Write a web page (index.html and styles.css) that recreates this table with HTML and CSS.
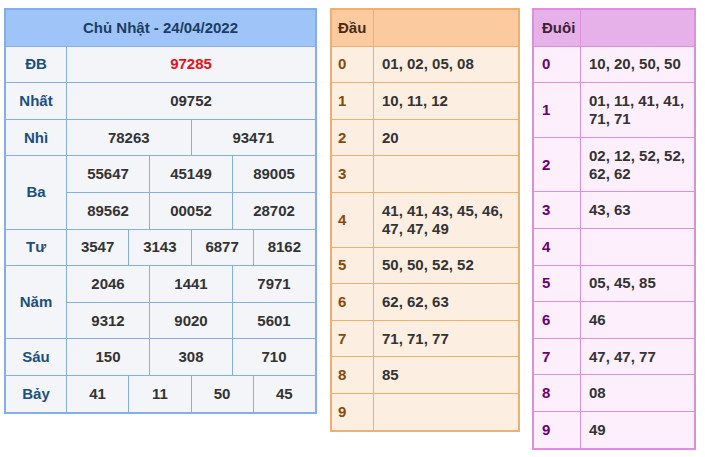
FILE: index.html
```html
<!DOCTYPE html>
<html lang="vi">
<head>
<meta charset="utf-8">
<title>Kết quả xổ số</title>
<link rel="stylesheet" href="styles.css">
</head>
<body>
<div class="page">
  <div class="kq">
    <div class="kq-title">Chủ Nhật - 24/04/2022</div>
    <div class="lbl">ĐB</div><div class="v s12 red">97285</div>
    <div class="lbl">Nhất</div><div class="v s12">09752</div>
    <div class="lbl">Nhì</div><div class="v s6">78263</div><div class="v s6">93471</div>
    <div class="lbl r2">Ba</div><div class="v s4">55647</div><div class="v s4">45149</div><div class="v s4">89005</div>
    <div class="v s4">89562</div><div class="v s4">00052</div><div class="v s4">28702</div>
    <div class="lbl">Tư</div><div class="v s3">3547</div><div class="v s3">3143</div><div class="v s3">6877</div><div class="v s3">8162</div>
    <div class="lbl r2">Năm</div><div class="v s4">2046</div><div class="v s4">1441</div><div class="v s4">7971</div>
    <div class="v s4">9312</div><div class="v s4">9020</div><div class="v s4">5601</div>
    <div class="lbl">Sáu</div><div class="v s4">150</div><div class="v s4">308</div><div class="v s4">710</div>
    <div class="lbl">Bảy</div><div class="v s3">41</div><div class="v s3">11</div><div class="v s3">50</div><div class="v s3">45</div>
  </div>

  <div class="lt dau">
    <div class="h">Đầu</div><div class="h"></div>
    <div class="k">0</div><div class="d">01, 02, 05, 08</div>
    <div class="k">1</div><div class="d">10, 11, 12</div>
    <div class="k">2</div><div class="d">20</div>
    <div class="k">3</div><div class="d"></div>
    <div class="k">4</div><div class="d">41, 41, 43, 45, 46, 47, 47, 49</div>
    <div class="k">5</div><div class="d">50, 50, 52, 52</div>
    <div class="k">6</div><div class="d">62, 62, 63</div>
    <div class="k">7</div><div class="d">71, 71, 77</div>
    <div class="k">8</div><div class="d">85</div>
    <div class="k">9</div><div class="d"></div>
  </div>

  <div class="lt duoi">
    <div class="h">Đuôi</div><div class="h"></div>
    <div class="k">0</div><div class="d">10, 20, 50, 50</div>
    <div class="k">1</div><div class="d">01, 11, 41, 41, 71, 71</div>
    <div class="k">2</div><div class="d">02, 12, 52, 52, 62, 62</div>
    <div class="k">3</div><div class="d">43, 63</div>
    <div class="k">4</div><div class="d"></div>
    <div class="k">5</div><div class="d">05, 45, 85</div>
    <div class="k">6</div><div class="d">46</div>
    <div class="k">7</div><div class="d">47, 47, 77</div>
    <div class="k">8</div><div class="d">08</div>
    <div class="k">9</div><div class="d">49</div>
  </div>
</div>
</body>
</html>
```
FILE: styles.css
```css
html, body {
  margin: 0;
  padding: 0;
  background: #ffffff;
}
body {
  font-family: "Liberation Sans", Arial, sans-serif;
  font-size: 15px;
  font-weight: bold;
  color: #333333;
}
.page {
  display: flex;
  align-items: flex-start;
  padding: 8px 0 0 4px;
}
.kq {
  width: 313px;
  box-sizing: border-box;
  display: grid;
  grid-template-columns: 60px repeat(12, 1fr);
  gap: 1px;
  background: #84ade9;
  border: 2px solid #84ade9;
}
.kq > div {
  background: #f3f5f9;
  line-height: 18px;
  padding: 8.8px 0;
  text-align: center;
  display: flex;
  align-items: center;
  justify-content: center;
}
.kq .kq-title {
  grid-column: 1 / -1;
  background: #9fc5f8;
  color: #1b3d63;
}
.kq .lbl {
  grid-column: 1;
  color: #1b4f7f;
}
.kq .r2 { grid-row: span 2; }
.s12 { grid-column: span 12; }
.s6 { grid-column: span 6; }
.s4 { grid-column: span 4; }
.s3 { grid-column: span 3; }
.red { color: #e8101a; }

.lt {
  box-sizing: border-box;
  display: grid;
  gap: 1px;
}
.lt > div {
  line-height: 18px;
  padding: 8.8px 8px;
  display: flex;
  align-items: center;
}
.lt .d {
  display: block;
}
.dau {
  margin-left: 13px;
  width: 190px;
  grid-template-columns: 41px 1fr;
  background: #f1ae6c;
  border: 2px solid #f1ae6c;
}
.dau > div { background: #fdeee2; }
.dau .h { background: #fbcb9f; color: #4a2a12; padding-left: 6px; }
.dau .k { color: #864a08; padding-left: 6px; }

.duoi {
  margin-left: 12px;
  width: 164px;
  grid-template-columns: 46px 1fr;
  background: #de8ede;
  border: 2px solid #de8ede;
}
.duoi > div { background: #fdeffb; }
.duoi .h { background: #e6b0e8; color: #3d2234; }
.duoi .k { color: #680070; }
```
